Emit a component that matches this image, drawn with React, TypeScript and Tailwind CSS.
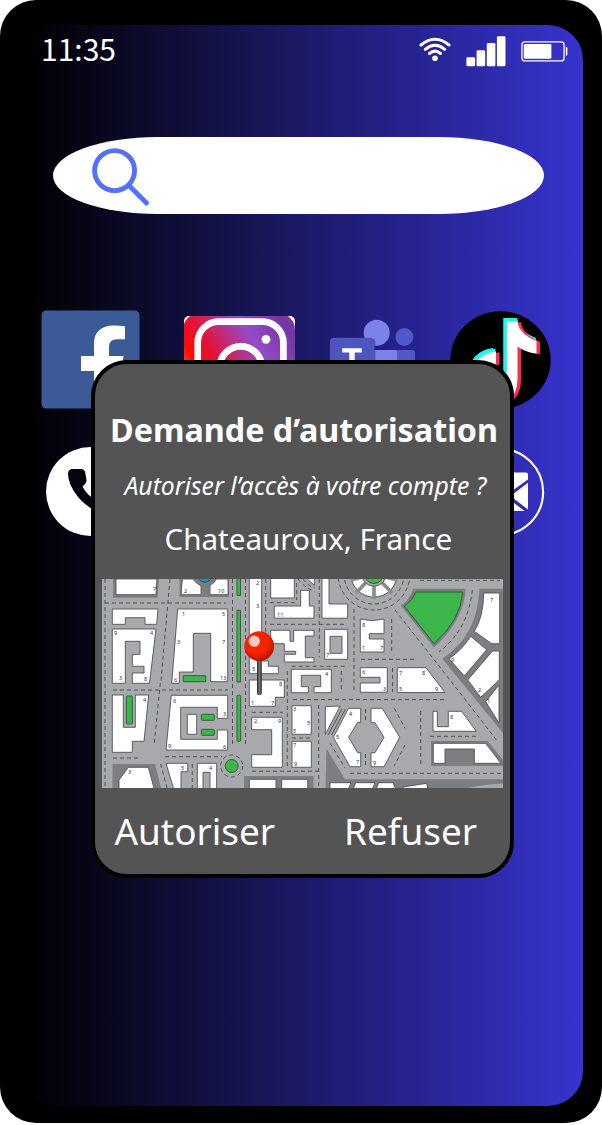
import React from "react";

const DASHES = [
  "M105 579V788", "M105 603H226", "M170 579L161 681", "M232.5 579V745", "M245.5 579V747", "M265.7 579V636",
  "M296.7 583V600", "M270 602.7H298", "M319.3 579V657", "M270 624.3H347", "M298 579Q304 587 315 592",
  "M303 579Q308 586 315 588", "M291.7 666.3H345", "M287.3 671V768", "M341.3 671V690", "M420 580.3H500",
  "M472.3 590Q468 630 439 652", "M395 610L450 680L498 742", "M391.7 619V651", "M354 609V692", "M361 659.3H415",
  "M392.5 668V692", "M293 699.6H447", "M420.7 711V765", "M394.3 708.3L405 728.3", "M405 745L394.3 765.7",
  "M330 743L345 768", "M350 773.3H502", "M318.7 705V788", "M365.5 709V722", "M365.5 754V768", "M430 736.3H477",
  "M252 771.2H320", "M252 712.3H283", "M292 738H311", "M113 690H228", "M160.3 683L154.3 743", "M113 758H139",
  "M165 756.7H222", "M160.7 764L167 788", "M192.3 764V788",
];

const BUILDINGS = [
  "116,579 157,579 156,594.7 116,594.7",
  "112.3,609 158,609 156.7,624.3 145,624.3 145,617.7 125.3,617.7 125.3,624.3 112.3,624.3",
  "112.3,629 156,629 149.5,683.3 132.3,683.3 132.3,673 144,673 144,666.3 132.3,666.3 132.3,654.3 140,654.3 140,641.3 125.3,641.3 125.3,683.3 112.3,683.3",
  "182.3,579 228,579 228,594.7 210,594.7 210,585 201,585 201,594.7 181,594.7",
  "177.7,609 227.7,609 227.7,681.7 210.7,681.7 210.7,633.3 193.3,633.3 193.3,672 179.3,672 179.3,683.3 171.7,683.3",
  "249.3,577 261.7,577 261.7,661 268.3,661 268.3,666.3 278.3,666.3 278.3,673.7 249.3,673.7",
  "249.3,680 284.3,680 284.3,697.3 275.3,697.3 275.3,706.3 249.3,706.3",
  "270.7,577 294.3,577 294.3,598 270.7,598",
  "274.3,606 300.7,606 300.7,590.3 309.3,590.3 309.3,606 314,606 314,618.2 274.3,618.2",
  "305,577 314.3,577 314.3,585.3",
  "322,577 329,577 329,604 347.7,604 347.7,618.2 322,618.2",
  "270.7,630.3 290,630.3 290,641.3 293.7,641.3 293.7,630.3 314,630.3 314,636 305.3,636 305.3,657.7 314,657.7 314,662 284.3,662 284.3,654.3 295.7,654.3 295.7,651.3 284.3,651.3 284.3,643.7 270.7,643.7",
  "324.7,629.3 347.7,629.3 347.7,659.3 324.7,659.3",
  "291.3,669.3 331.3,669.3 331.3,692.7 314,692.7 314,686.7 320.7,686.7 320.7,675.3 301.3,675.3 301.3,686.7 308.3,686.7 308.3,692.7 291.3,692.7",
  "360.3,619 372,620.7 384,619 384,633.7 369.3,633.7 369.3,639 384,639 384,652 360.3,652",
  "360.3,667.7 387.3,667.7 387.3,692.3 360.3,692.3 360.3,683 380,683 380,677.3 360.3,677.3",
  "397.3,667.7 426,667.7 445,692.5 397.3,692.5",
  "371,708.3 382.3,708.3 399.7,737.3 384,766.7 371,766.7 371,752.7 375,752.7 384,737.3 375,722.7 371,722.7",
  "360.7,708.3 360.7,722.3 357.7,722.3 348.7,737.3 357.7,752.7 360.7,752.7 360.7,766.7 350,766.7 333.3,737.3 348.5,708.3",
  "325.3,706.6 340.3,706 325.3,734.3",
  "433,711.3 437.3,711.3 437.3,726.7 448.3,726.7 448.3,711.3 461.7,711.3 476.3,731.3 433,731.3",
  "251.7,717.3 282.3,717.3 282.3,767.3 251.7,767.3 251.7,754.7 271.7,754.7 271.7,729.7 251.7,729.7",
  "292,705.7 311.3,705.7 311.3,734.3 292,734.3",
  "292,741.3 311.3,741.3 311.3,767.3 292,767.3",
  "112.3,695 123.3,695 123.3,727.3 135.3,727.3 135.3,695 148.7,695 144,741.3 132.3,741.3 132.3,752.3 112.3,752.3",
  "171.3,695.3 227.7,695.3 227.7,718.3 217.3,718.3 217.3,707.3 180.7,707.3 180.7,739.3 217.3,739.3 217.3,730 227.7,730 227.7,750 166,750",
  "187.3,714.3 196.7,714.3 196.7,734.3 187.3,734.3",
  "166,763.3 187.7,763.3 187.7,771.7 181,771.7 181,790 174,790",
  "197.3,763.3 216.7,763.3 216.7,790 210,790 210,772.3 203,772.3 203,790 197.3,790",
];

const LABELS: [number, number, string][] = [
  [153, 591, "7"], [184, 593, "2"], [218, 593, "10"], [182, 616, "1"], [222, 616, "5"], [177, 644, "3"],
  [222, 644, "7"], [174, 682, "6"], [220, 680, "13"], [114, 635, "9"], [150, 635, "4"], [119, 680, "3"],
  [144, 681, "8"], [256, 584.5, "2"], [256, 608, "3"], [277, 617, "11"], [252, 671, "5"], [279, 686, "8"],
  [251, 705, "1"], [271, 705, "7"], [326, 657, "7"], [325, 676, "4"], [362, 627, "8"], [362, 650, "1"],
  [380, 650, "7"], [362, 674, "6"], [383, 691, "3"], [399, 675, "7"], [422, 675, "8"], [399, 691, "5"],
  [435, 691, "9"], [490, 602, "7"], [451, 662, "9"], [478, 692, "2"], [487, 703, "1"], [450, 719, "8"],
  [349, 716, "4"], [336, 739, "5"], [356, 764, "7"], [373, 765, "9"], [293, 711, "3"], [307, 725, "5"],
  [293, 733, "5"], [293, 747, "7"], [294, 766, "9"], [254, 723, "2"], [278, 723, "9"], [143, 702, "4"],
  [173, 703, "6"], [223, 716, "3"], [168, 748, "9"], [223, 749, "6"], [128, 774, "3"], [181, 770, "5"],
  [209, 770, "4"],
];

function CityMap() {
  return (
    <svg className="block h-[209px] w-[401px]" viewBox="102 579 401 209" role="img" aria-label="Carte de Chateauroux">
      <rect x="102" y="579" width="401" height="209" fill="#a7a9ac" />
      <g fill="#7d7e82">
        <path d="M113 579H159L157.5 597.7H113Z" />
        <path d="M179.5 579H229V597H179.5Z" />
        <path d="M112.5 764H155L161 788H112.5Z" />
        <path d="M244 776H313.5V788H244Z" />
        <path d="M326.5 748.5L345 779.3H503V788H325.5Z" />
        <path d="M431 741H487.7L503 760V766H431Z" />
        <path d="M479.3 588.7H503V733L442.3 658.7Q478 635 479.3 588.7Z" />
        <path d="M413.3 588.7H465.7Q464 620 434 647.5L400.7 605.5Q409 601 413.3 588.7Z" />
      </g>
      <path d="M468 788Q485 784 503 783.5V788Z" fill="#a7a9ac" />
      <g fill="none" stroke="#4f5053" strokeWidth="1" strokeDasharray="4 3">
        {DASHES.map((d) => <path key={d} d={d} />)}
        <circle cx="374" cy="574" r="30" />
        <circle cx="374" cy="574" r="36" />
        <circle cx="231.7" cy="766" r="11" />
      </g>
      <g fill="#fff" stroke="#4f5053" strokeWidth="0.9">
        {BUILDINGS.map((p) => <polygon key={p} points={p} />)}
        <path d="M330 636.3H342V653.3H330Z" fill="#a7a9ac" />
        <path d="M128.3 767.3H148.3L154.5 790H119V780Z" />
        <path d="M249.3 779.3H276V790H249.3Z M281.7 779.3H307.7V790H281.7Z" />
        <path d="M330 782.7H351L348 790H330Z M355.5 782.7H375L372 790H353Z M378.5 782.7H393L396 790H376Z M403 787L426.7 783.3L428 790H403Z" />
        <path d="M433.3 743.3H485.7L501 763.3H474.3V749H445V763.3H433.3Z" />
        <path d="M483.7 593H499.7V643.7H491.7L474.3 631.3Q483.5 617 483.7 593Z" />
        <path d="M470.7 636.3L486.7 649.7L464.3 676L449 658.7Q462 650 470.7 636.3Z" />
        <path d="M492.5 651H499.3V680L480.7 697.3L467.7 680Z M485.7 701.7L499 685V723Z" />
      </g>
      <circle cx="374" cy="574" r="23.2" fill="#fff" stroke="#4f5053" />
      <path d="M374 574V599M374 574L392 593M374 574L356 593M374 574L397 580M374 574L351 580" stroke="#8a8b8f" strokeWidth="3.6" />
      <circle cx="374" cy="574" r="12.2" fill="#a7a9ac" stroke="#5d5e61" />
      <circle cx="374" cy="574" r="9.5" fill="#3cb54a" stroke="#315b35" />
      <circle cx="205" cy="574" r="12.5" fill="#7d7e82" stroke="#4f5053" strokeWidth="0.7" />
      <path d="M201.3 584H209.5V597H201.3Z" fill="#7d7e82" />
      <circle cx="205" cy="574" r="8" fill="#1795cf" stroke="#35434c" />
      <path d="M342 709L328 735M345.5 709L331.5 735" stroke="#4f5053" fill="none" />
      <g fill="#3cb54a" stroke="#2b5733" strokeWidth="0.9">
        <path d="M416 592H462.7Q461 620 434 643.7L404.3 606.3Q413 600 416 592Z" />
        <path d="M183.3 675.7H205.7V681.7H183.3Z" />
        <path d="M237 578H240.5V595.3H237Z M237 610.3H240.5V682H237Z" />
        <rect x="237" y="695.3" width="3.7" height="46" rx="1" />
        <rect x="126.3" y="696" width="6" height="28" rx="1" />
        <rect x="201.3" y="714.3" width="13" height="6" rx="1" />
        <rect x="201.3" y="729.3" width="13" height="6" rx="1" />
        <circle cx="231.7" cy="766" r="6.5" />
      </g>
      <g className="font-['Noto_Sans'] text-[5.6px]" fill="#333">
        {LABELS.map(([x, y, t]) => <text key={`${x}-${y}`} x={x} y={y}>{t}</text>)}
      </g>
      <defs>
        <radialGradient id="ball" cx="43%" cy="38%" r="62%">
          <stop offset="0.6" stopColor="#f52300" /><stop offset="1" stopColor="#b51500" />
        </radialGradient>
        <linearGradient id="needle"><stop stopColor="#222" /><stop offset="0.5" stopColor="#777" /><stop offset="1" stopColor="#222" /></linearGradient>
      </defs>
      <rect x="257" y="657" width="4.8" height="38.3" rx="2.2" fill="url(#needle)" />
      <circle cx="259.2" cy="646.2" r="14.9" fill="url(#ball)" />
      <circle cx="254.3" cy="641.2" r="5.6" fill="#ffc9c2" />
    </svg>
  );
}

function StatusIcons() {
  return (
    <svg className="h-[34px] w-[150px]" viewBox="419 34 150 34" aria-hidden="true">
      <g fill="none" stroke="#fff" strokeWidth="3" strokeLinecap="round">
        <path d="M421 45Q435 33.5 449 45" />
        <path d="M425.3 49.3Q435 41.3 444.7 49.3" />
        <path d="M429.5 53.5Q435 48.7 440.5 53.5" />
      </g>
      <circle cx="435" cy="58.3" r="2.8" fill="#fff" />
      <g fill="#fff">
        <rect x="466.4" y="57.3" width="8.8" height="9" rx="1.3" />
        <rect x="476.6" y="50.3" width="8.6" height="16" rx="1.3" />
        <rect x="486.8" y="43" width="8.6" height="23.3" rx="1.3" />
        <rect x="496.9" y="36.2" width="8.6" height="30.1" rx="1.3" />
        <rect x="523.7" y="44" width="27.7" height="14.7" rx="1.2" />
        <path d="M565.8 46.8Q567.4 46.8 567.4 48.6V54Q567.4 56 565.8 56Z" />
      </g>
      <rect x="521.9" y="41.9" width="42.2" height="19" rx="3" fill="none" stroke="#fff" strokeWidth="1.3" />
    </svg>
  );
}

function FacebookIcon() {
  return (
    <svg className="h-[99px] w-[99px]" viewBox="41 310 99 99" aria-label="Facebook">
      <rect x="41.5" y="310.6" width="98" height="98" rx="4.7" fill="#3c5a98" />
      <path d="M94 407.5V371H81V356H94V343.3C94 332 101.5 325.4 113.5 325.4Q120 325.4 125 326.2V339.3H117Q109 339.3 109 347.3V356H123.5L121.5 371H109V407.5Z" fill="#fff" />
    </svg>
  );
}

function InstagramIcon() {
  return (
    <svg className="h-[111px] w-[111px] rounded-[5px]" viewBox="184 316 111 111" aria-label="Instagram">
      <defs>
        <linearGradient id="insta" x1="0" y1="0.62" x2="0.85" y2="0.05">
          <stop stopColor="#ff8a00" /><stop offset="0.2" stopColor="#ff0a05" /><stop offset="0.38" stopColor="#e0143c" />
          <stop offset="0.72" stopColor="#964bc8" /><stop offset="1" stopColor="#7836a5" />
        </linearGradient>
      </defs>
      <rect x="184" y="316" width="111" height="111" fill="#fff" />
      <rect x="183" y="313.5" width="112" height="114" rx="16" fill="url(#insta)" />
      <rect x="197.7" y="321.6" width="85.7" height="90" rx="21" fill="none" stroke="#fff" strokeWidth="6.7" />
      <circle cx="240.8" cy="367.3" r="21" fill="none" stroke="#fff" strokeWidth="6.7" />
      <circle cx="266" cy="339.3" r="4.4" fill="#fff" />
    </svg>
  );
}

function TeamsIcon() {
  return (
    <svg className="h-[80px] w-[86px]" viewBox="330 319 86 80" aria-label="Teams">
      <circle cx="404.3" cy="337" r="9" fill="#5059c9" />
      <path d="M390 350H412Q415 350 415 353V370Q415 385 402 385H390Z" fill="#5059c9" />
      <circle cx="376.7" cy="332.8" r="13" fill="#7b83eb" />
      <path d="M360 350H394Q397.2 350 397.2 353V375Q397 396 376 398Q360 396 358 378Z" fill="#7b83eb" />
      <rect x="333" y="338.5" width="42.5" height="46" rx="4" fill="#343b91" opacity="0.55" />
      <rect x="330" y="337.8" width="44.2" height="45" rx="4" fill="#4e56bd" />
      <path d="M342.3 348.2H361.7V352.4H354.7V373H349.3V352.4H342.3Z" fill="#fff" />
    </svg>
  );
}

function TikTokIcon() {
  const note = "M505 318H516Q518 331 535 337.5V350Q524 349 516 343V375Q516 400 492 401Q469 399 469 377Q471 351 494.5 348V360Q482 363 482 377Q483 388 493 388Q504 387 505 376Z";
  return (
    <svg className="h-[98px] w-[101px]" viewBox="450.5 310 101 98" aria-label="TikTok">
      <ellipse cx="501" cy="358.9" rx="50.2" ry="48.7" fill="#000" />
      <path d={note} fill="#25f4ee" transform="translate(-1 -1)" />
      <path d={note} fill="#25f4ee" transform="translate(1.5 -0.5)" />
      <path d={note} fill="#fe2c55" transform="translate(5.5 3.3)" />
      <path d={note} fill="#fff" transform="translate(2 2.5)" />
      <path d="M504 317H517.5L518.5 320.6H507.5V371H504Z" fill="#25f4ee" />
    </svg>
  );
}

function PhoneIcon() {
  return (
    <svg className="h-[89px] w-[89px]" viewBox="46 447 89 89" aria-label="Téléphone">
      <circle cx="90.5" cy="491.5" r="44.5" fill="#fff" />
      <path d="M72 469H81Q84.5 469 85.2 472.5L86.5 480Q86.7 482 85 484L82.5 486.5Q87 496 98 501L102 497Q104 496 106 497L112 500Q115 502 115 505V511Q114 516 109 516Q90 511 78 497Q68 484 68 474Q68 469.5 72 469Z" fill="#05040f" />
    </svg>
  );
}

function MailIcon() {
  return (
    <svg className="h-[88px] w-[90px]" viewBox="455 448 90 88" aria-label="Courrier">
      <circle cx="500" cy="492" r="43.1" fill="none" stroke="#fff" strokeWidth="2.1" />
      <g fill="#fff">
        <path d="M473 472.5H526Q528 472.5 528 474.5V479.5L500 499.5L472 479.5V474Z" />
        <path d="M528 482.7V509.5L510.5 496Z M472 482.7V509.5L489.5 496Z" />
        <path d="M475.5 511L492 498.5L500 504L508 498.5L524.5 511Z" />
      </g>
    </svg>
  );
}

export default function App() {
  return (
    <div className="h-[1125px] w-[602px] overflow-hidden bg-white font-['Noto_Sans','Open_Sans',sans-serif] text-white">
      <div className="relative h-[1123px] w-[602px] rounded-[36px] bg-black pt-[25px] pl-[24px]">
        <main className="h-[1081px] w-[559px] rounded-[35px] bg-[linear-gradient(to_right,#000000,#3733cf)]">
          <header className="flex h-[112px] items-start justify-between pt-[9px] pr-[14px] pl-[17px]">
            <time className="-mt-[2px] font-['Noto_Sans_CJK_JP',sans-serif] text-[30px] leading-[32px]">11:35</time>
            <StatusIcons />
          </header>
          <div role="search" className="ml-[29px] flex h-[77px] w-[491px] items-start rounded-[105px/38.5px] bg-white pt-[10px] pl-[38px]">
            <svg className="h-[60px] w-[60px]" viewBox="91 147 60 60" fill="none" stroke="#5271ff" strokeWidth="4.9" strokeLinecap="round" aria-label="Rechercher">
              <circle cx="114.6" cy="170.6" r="20" />
              <path d="M129.5 186L146.5 203" />
            </svg>
          </div>
          <nav className="mt-[96px] flex h-[137px] items-start pl-[17px]">
            <FacebookIcon />
            <div className="ml-[44px] pt-[6px]"><InstagramIcon /></div>
            <div className="ml-[35px] pt-[9px]"><TeamsIcon /></div>
            <div className="ml-[34px] pt-[0.5px]"><TikTokIcon /></div>
          </nav>
          <nav className="flex items-start justify-between pr-[38px] pl-[22px]">
            <PhoneIcon />
            <div className="pt-[1px]"><MailIcon /></div>
          </nav>
        </main>

        <section role="dialog" className="absolute top-[359.5px] left-[90.5px] flex h-[518px] w-[423.5px] flex-col items-start rounded-[36px] border-4 border-black bg-[#545454]">
          <h1 className="mt-[41px] ml-[15.5px] h-[48px] text-[32.3px] leading-[48px] font-bold whitespace-nowrap">Demande d’autorisation</h1>
          <p className="mt-[15px] ml-[30px] h-[36px] text-[24.7px] leading-[36px] whitespace-nowrap italic">Autoriser l’accès à votre compte ?</p>
          <p className="mt-[11px] ml-[70px] h-[48px] text-[29.6px] leading-[48px] whitespace-nowrap">Chateauroux, France</p>
          <div className="mt-[16.5px] ml-[7.5px]"><CityMap /></div>
          <div className="mt-[15px] flex h-[56px] w-full justify-between pr-[33px] pl-[20px] text-[36.9px] leading-[56px]">
            <button type="button">Autoriser</button>
            <button type="button">Refuser</button>
          </div>
        </section>
      </div>
    </div>
  );
}
